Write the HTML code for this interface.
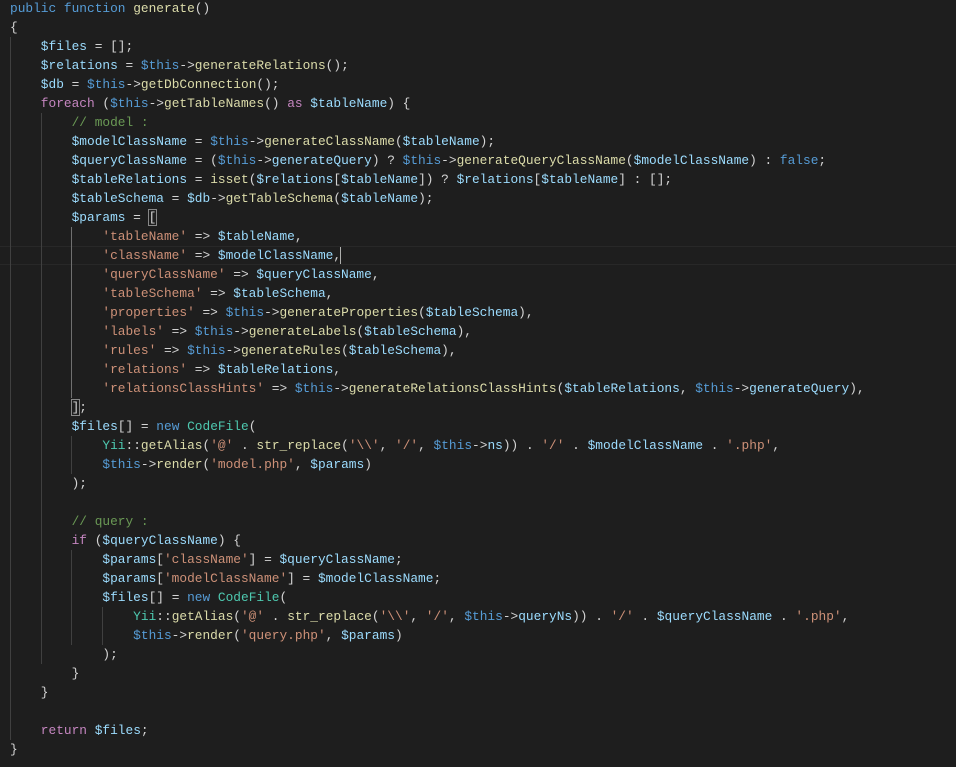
<!DOCTYPE html>
<html><head><meta charset="utf-8"><style>
html,body{margin:0;padding:0;background:#1e1e1e;width:956px;height:767px;overflow:hidden}
#c{position:absolute;left:10px;top:-1px;font-family:"Liberation Mono",monospace;font-size:12.83px;line-height:19px;color:#d4d4d4;white-space:pre;margin:0}
.k{color:#569cd6}.c{color:#c586c0}.v{color:#9cdcfe}.f{color:#dcdcaa}.s{color:#ce9178}.m{color:#6a9955}.t{color:#4ec9b0}
.g{position:absolute;width:1px;background:#404040}
.hl{position:absolute;left:0;width:956px;height:17px;border-top:1px solid #282828;border-bottom:1px solid #282828}
.br{outline:1px solid #888;}
</style></head><body>
<div class="hl" style="top:246px"></div>
<div class="g" style="left:10px;top:37px;height:703px"></div>
<div class="g" style="left:41px;top:113px;height:551px"></div>
<div class="g" style="left:71px;top:227px;height:171px;background:#707070"></div>
<div class="g" style="left:71px;top:436px;height:38px"></div>
<div class="g" style="left:71px;top:550px;height:95px"></div>
<div class="g" style="left:102px;top:607px;height:38px"></div>
<div style="position:absolute;left:340px;top:247px;width:1px;height:17px;background:#aeafad"></div>
<pre id="c"><span class="k">public</span> <span class="k">function</span> <span class="f">generate</span>()
{
    <span class="v">$files</span> = [];
    <span class="v">$relations</span> = <span class="k">$this</span>-&gt;<span class="f">generateRelations</span>();
    <span class="v">$db</span> = <span class="k">$this</span>-&gt;<span class="f">getDbConnection</span>();
    <span class="c">foreach</span> (<span class="k">$this</span>-&gt;<span class="f">getTableNames</span>() <span class="c">as</span> <span class="v">$tableName</span>) {
        <span class="m">// model :</span>
        <span class="v">$modelClassName</span> = <span class="k">$this</span>-&gt;<span class="f">generateClassName</span>(<span class="v">$tableName</span>);
        <span class="v">$queryClassName</span> = (<span class="k">$this</span>-&gt;<span class="v">generateQuery</span>) ? <span class="k">$this</span>-&gt;<span class="f">generateQueryClassName</span>(<span class="v">$modelClassName</span>) : <span class="k">false</span>;
        <span class="v">$tableRelations</span> = <span class="f">isset</span>(<span class="v">$relations</span>[<span class="v">$tableName</span>]) ? <span class="v">$relations</span>[<span class="v">$tableName</span>] : [];
        <span class="v">$tableSchema</span> = <span class="v">$db</span>-&gt;<span class="f">getTableSchema</span>(<span class="v">$tableName</span>);
        <span class="v">$params</span> = <span class="br">[</span>
            <span class="s">'tableName'</span> =&gt; <span class="v">$tableName</span>,
            <span class="s">'className'</span> =&gt; <span class="v">$modelClassName</span>,
            <span class="s">'queryClassName'</span> =&gt; <span class="v">$queryClassName</span>,
            <span class="s">'tableSchema'</span> =&gt; <span class="v">$tableSchema</span>,
            <span class="s">'properties'</span> =&gt; <span class="k">$this</span>-&gt;<span class="f">generateProperties</span>(<span class="v">$tableSchema</span>),
            <span class="s">'labels'</span> =&gt; <span class="k">$this</span>-&gt;<span class="f">generateLabels</span>(<span class="v">$tableSchema</span>),
            <span class="s">'rules'</span> =&gt; <span class="k">$this</span>-&gt;<span class="f">generateRules</span>(<span class="v">$tableSchema</span>),
            <span class="s">'relations'</span> =&gt; <span class="v">$tableRelations</span>,
            <span class="s">'relationsClassHints'</span> =&gt; <span class="k">$this</span>-&gt;<span class="f">generateRelationsClassHints</span>(<span class="v">$tableRelations</span>, <span class="k">$this</span>-&gt;<span class="v">generateQuery</span>),
        <span class="br">]</span>;
        <span class="v">$files</span>[] = <span class="k">new</span> <span class="t">CodeFile</span>(
            <span class="t">Yii</span>::<span class="f">getAlias</span>(<span class="s">'@'</span> . <span class="f">str_replace</span>(<span class="s">'\\'</span>, <span class="s">'/'</span>, <span class="k">$this</span>-&gt;<span class="v">ns</span>)) . <span class="s">'/'</span> . <span class="v">$modelClassName</span> . <span class="s">'.php'</span>,
            <span class="k">$this</span>-&gt;<span class="f">render</span>(<span class="s">'model.php'</span>, <span class="v">$params</span>)
        );

        <span class="m">// query :</span>
        <span class="c">if</span> (<span class="v">$queryClassName</span>) {
            <span class="v">$params</span>[<span class="s">'className'</span>] = <span class="v">$queryClassName</span>;
            <span class="v">$params</span>[<span class="s">'modelClassName'</span>] = <span class="v">$modelClassName</span>;
            <span class="v">$files</span>[] = <span class="k">new</span> <span class="t">CodeFile</span>(
                <span class="t">Yii</span>::<span class="f">getAlias</span>(<span class="s">'@'</span> . <span class="f">str_replace</span>(<span class="s">'\\'</span>, <span class="s">'/'</span>, <span class="k">$this</span>-&gt;<span class="v">queryNs</span>)) . <span class="s">'/'</span> . <span class="v">$queryClassName</span> . <span class="s">'.php'</span>,
                <span class="k">$this</span>-&gt;<span class="f">render</span>(<span class="s">'query.php'</span>, <span class="v">$params</span>)
            );
        }
    }

    <span class="c">return</span> <span class="v">$files</span>;
}</pre>
</body></html>
